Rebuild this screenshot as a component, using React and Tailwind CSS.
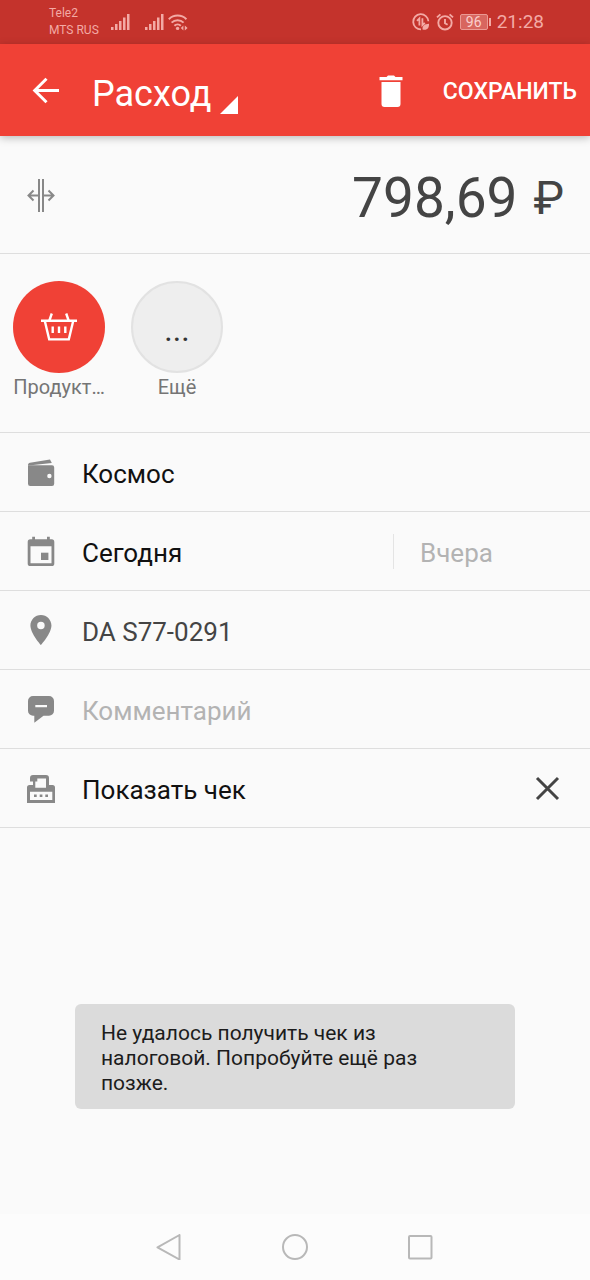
const categories = [
  { id: 'food', label: 'Продукт…', active: true },
  { id: 'more', label: 'Ещё', active: false },
]

function SignalIcon() {
  return (
    <svg className="h-5 w-[19px]" viewBox="0 0 19 20" fill="currentColor">
      <rect x="0" y="15" width="2.5" height="3" />
      <rect x="4" y="12" width="2.5" height="6" />
      <rect x="8" y="9" width="2.5" height="9" />
      <rect x="12" y="5.5" width="2.5" height="12.5" />
      <rect x="16" y="2" width="2.5" height="16" />
    </svg>
  )
}

function WifiIcon() {
  return (
    <svg className="h-5 w-5" viewBox="0 0 20 20" fill="none" stroke="currentColor" strokeWidth="2">
      <path d="M.8 7.2a12.6 12.6 0 0 1 17.6 0" />
      <path d="M3.6 10.6a8.6 8.6 0 0 1 12 0" />
      <path d="M6.4 13.8a4.6 4.6 0 0 1 6.4 0" />
      <circle cx="9.6" cy="16.4" r="1.7" fill="currentColor" stroke="none" />
      <path d="M15.4 13.6v4.8l-2.6-2.4zM16.8 13.6v4.8l2.8-2.4z" fill="currentColor" stroke="none" />
    </svg>
  )
}

function DataSaverIcon() {
  return (
    <svg className="h-5 w-[18px]" viewBox="0 0 18 20" fill="none" stroke="currentColor" strokeWidth="1.8">
      <path d="M16.4 9.2A7.6 7.6 0 1 0 9 17.4" />
      <path d="M7.4 13.4V6.4L5 8.8M10.4 6.2v7l2.4-2.4" />
      <path d="M10.6 17.6c-.6-4 2.2-5.6 6.4-5.8.2 4.4-1.8 6.8-6.4 5.8z" fill="currentColor" stroke="none" />
    </svg>
  )
}

function AlarmIcon() {
  return (
    <svg className="h-5 w-[18px]" viewBox="0 0 18 20" fill="none" stroke="currentColor" strokeWidth="1.9">
      <circle cx="9" cy="10.8" r="6.7" />
      <path d="M9 7v4.2l2.6 1.6M1 5.4 4.4 2.4M17 5.4 13.6 2.4" />
    </svg>
  )
}

function StatusBar() {
  return (
    <div className="flex h-11 items-center bg-[#c4332c] pl-[49px] pr-[46px] text-[#f3aaa5]">
      <div className="w-[62px] text-[12px] leading-[17px]">
        <div>Tele2</div>
        <div>MTS RUS</div>
      </div>
      <SignalIcon />
      <div className="ml-[15px] flex items-center gap-1">
        <SignalIcon />
        <WifiIcon />
      </div>
      <div className="ml-auto flex items-center gap-[6px]">
        <DataSaverIcon />
        <AlarmIcon />
        <div className="flex items-center gap-px">
          <div className="h-4 w-7 rounded-xs border border-[#eb9993] bg-[#d8665f] text-center text-[14px] leading-[14px] text-[#fbcfcc]">
            96
          </div>
          <div className="h-2 w-[2px] bg-current" />
        </div>
        <div className="text-[19px] leading-5">21:28</div>
      </div>
    </div>
  )
}

function Header() {
  return (
    <header className="flex h-[92px] items-center bg-[#f04136] pl-8 pr-[13px] text-white shadow-[0_2px_8px_rgba(0,0,0,0.25)]">
      <button type="button" aria-label="Назад">
        <svg className="h-7 w-7" viewBox="0 0 28 28" fill="none" stroke="currentColor" strokeWidth="3">
          <path d="M27 14.5H3M14.5 2.7 2.7 14.5l11.8 11.8" />
        </svg>
      </button>
      <div className="ml-8 flex items-end">
        <select
          aria-label="Тип операции"
          className="field-sizing-content h-12 appearance-none bg-transparent pt-1 text-[36px] leading-[48px]"
          defaultValue="expense"
        >
          <option value="expense">Расход</option>
        </select>
        <svg className="ml-[9px] h-[18px] w-[18px]" viewBox="0 0 18 18" fill="currentColor">
          <path d="M18 0v18H0z" />
        </svg>
      </div>
      <button type="button" aria-label="Удалить" className="ml-auto pt-0.5">
        <svg className="h-8 w-6" viewBox="0 0 24 32" fill="currentColor">
          <path d="M.5 2H7.5L9 .5h6L16.5 2h7v3.2H.5zM2.500 7h19v22a3 3 0 0 1-3 3h-13a3 3 0 0 1-3-3z" />
        </svg>
      </button>
      <button type="button" className="ml-10 pt-1 text-[23px] leading-8 font-medium">
        СОХРАНИТЬ
      </button>
    </header>
  )
}

function SplitIcon() {
  return (
    <svg className="h-9 w-8" viewBox="0 0 32 36" fill="none" stroke="#888" strokeWidth="2">
      <path d="M14 2v33M18 2v33" />
      <path d="M13 18.5H3M8.5 13.5l-5 5 5 5M19 18.5h10M23.5 13.5l5 5-5 5" />
    </svg>
  )
}

function BasketIcon() {
  return (
    <svg className="h-7 w-9" viewBox="0 0 36 28" fill="none" stroke="#fff" strokeWidth="2.4">
      <path d="M0 7.8h36M3.8 8l4.4 18.4h19.6L32.2 8" />
      <path d="M10.8.5 8.4 7.5M25.2.5l2.4 7" />
      <path d="M11.7 13.5V20M18 13.5V20M24.3 13.5V20" />
    </svg>
  )
}

function WalletIcon() {
  return (
    <svg className="h-8 w-8 shrink-0" viewBox="0 0 32 32" fill="#888">
      <path d="M3 9C3 7.600 3.800 6.900 5 6.700L25 3.600l1.800 3.400L6 9.200H3z" />
      <path
        fillRule="evenodd"
        d="M3 9.200h24a2.200 2.200 0 0 1 2.200 2.200v16.400A2.200 2.200 0 0 1 27 30H5.200A2.200 2.200 0 0 1 3 27.800zM24.400 17.800a2.200 2.200 0 1 0 0 4.400 2.200 2.200 0 0 0 0-4.400z"
      />
    </svg>
  )
}

function CalendarIcon() {
  return (
    <svg className="h-8 w-8 shrink-0" viewBox="0 0 32 32" fill="#888">
      <path
        fillRule="evenodd"
        d="M7.2 1.8H10v2.5h12V1.8h2.8v2.5h1.9a2.6 2.6 0 0 1 2.6 2.6v21.5a2.6 2.6 0 0 1-2.6 2.6H5.3a2.6 2.6 0 0 1-2.6-2.6V6.900a2.600 2.600 0 0 1 2.600-2.600h1.900zM5.500 11.300v17h21v-17z"
      />
      <path d="M16 17.700h7.400V25H16z" />
    </svg>
  )
}

function PinIcon() {
  return (
    <svg className="h-8 w-8 shrink-0" viewBox="1.4 1.4 21.3 21.3" fill="#888">
      <path d="M12 2C8.130 2 5 5.130 5 9c0 5.250 7 13 7 13s7-7.750 7-13c0-3.870-3.130-7-7-7zm0 9.500a2.500 2.500 0 1 1 0-5 2.500 2.500 0 0 1 0 5z" />
    </svg>
  )
}

function CommentIcon() {
  return (
    <svg className="h-8 w-8 shrink-0" viewBox="0 0 32 32" fill="#888">
      <path
        fillRule="evenodd"
        d="M8 3h16a5 5 0 0 1 5 5v9.700a5 5 0 0 1-5 5h-5.500L9.300 29.700V22.700H8a5 5 0 0 1-5-5V8a5 5 0 0 1 5-5zM10.300 12v2.300H22V12z"
      />
    </svg>
  )
}

function ReceiptIcon() {
  return (
    <svg className="h-8 w-8 shrink-0" viewBox="0 0 32 32" fill="#888">
      <path
        fillRule="evenodd"
        d="M4.500 13h23A2.500 2.500 0 0 1 30 15.500V31H2V15.500A2.500 2.500 0 0 1 4.500 13zM5 19.700V28h22.300v-8.300z"
      />
      <path d="M8 3h13a3 3 0 0 1 3 3v8H8V9.500H5V6a3 3 0 0 1 3-3z" />
      <path d="M10.300 9.500h2V6.500H21v9.200H10.300z" fill="#fafafa" />
      <path d="M9 22.400h2.700v2.700H9zM14.700 22.400h2.700v2.700h-2.700zM20.300 22.400H23v2.700h-2.700z" />
    </svg>
  )
}

function Row({ icon, children }) {
  return (
    <div className="flex h-[79px] items-center gap-[25px] border-b border-[#dedede] pl-[25px] text-[26px] leading-8 text-[#111]">
      {icon}
      {children}
    </div>
  )
}

function CategoryButton({ label, active }) {
  return (
    <button type="button" className="flex w-[92px] flex-col items-center text-[20px] leading-7 text-[#757575]">
      {active ? (
        <span className="flex size-[92px] items-center justify-center rounded-full bg-[#f04136]">
          <BasketIcon />
        </span>
      ) : (
        <span className="flex size-[92px] items-center justify-center rounded-full border-2 border-[#e2e2e2] bg-[#eee] pt-1.5 text-[32px] text-[#333]">
          ...
        </span>
      )}
      <span className="whitespace-nowrap">{label}</span>
    </button>
  )
}

function NavBar() {
  return (
    <nav className="flex h-[66px] items-center justify-center gap-[100px] bg-[#fcfcfc] text-[#b8b8b8]">
      <button type="button" aria-label="Назад">
        <svg className="size-[26px]" viewBox="0 0 26 26" fill="none" stroke="currentColor" strokeWidth="2" strokeLinejoin="round">
          <path d="M23.500 1v24.500L1.500 13.300z" />
        </svg>
      </button>
      <button type="button" aria-label="Домой">
        <svg className="size-[26px]" viewBox="0 0 26 26" fill="none" stroke="currentColor" strokeWidth="2">
          <circle cx="13" cy="13" r="12" />
        </svg>
      </button>
      <button type="button" aria-label="Недавние">
        <svg className="size-[26px]" viewBox="0 0 26 26" fill="none" stroke="currentColor" strokeWidth="2">
          <rect x="1" y="2" width="22.500" height="22.500" rx="1" />
        </svg>
      </button>
    </nav>
  )
}

export default function App() {
  return (
    <div className="flex min-h-screen flex-col bg-[#fafafa] font-[Roboto,sans-serif]">
      <StatusBar />
      <Header />

      <main className="flex flex-1 flex-col">
        <div className="flex h-[118px] items-center border-b border-[#dedede] pl-[25px] pr-[26px] text-[#444]">
          <button type="button" aria-label="Разделить">
            <SplitIcon />
          </button>
          <input
            aria-label="Сумма"
            className="min-w-0 flex-1 bg-transparent pt-[6px] text-right text-[55px] leading-[64px]"
            defaultValue="798,69"
          />
          <span className="ml-4 pt-[6px] text-[46px] leading-[64px]">₽</span>
        </div>

        <div className="flex h-[179px] items-start gap-[26px] border-b border-[#dedede] pl-[13px] pt-[27px]">
          {categories.map((c) => (
            <CategoryButton key={c.id} label={c.label} active={c.active} />
          ))}
        </div>

        <Row icon={<WalletIcon />}>
          <button type="button" className="flex-1 pt-[3px] text-left">Космос</button>
        </Row>
        <Row icon={<CalendarIcon />}>
          <button type="button" className="flex-1 pt-[3px] text-left">Сегодня</button>
          <button type="button" className="w-[197px] border-l border-[#e4e4e4] pl-[26px] pt-[3px] text-left text-[#b3b3b3]">
            Вчера
          </button>
        </Row>
        <Row icon={<PinIcon />}>
          <input
            aria-label="Место"
            className="min-w-0 flex-1 bg-transparent pt-[3px] text-[#444]"
            defaultValue="DA S77-0291"
          />
        </Row>
        <Row icon={<CommentIcon />}>
          <input
            aria-label="Комментарий"
            className="min-w-0 flex-1 bg-transparent pt-[3px] placeholder:text-[#b3b3b3]"
            placeholder="Комментарий"
          />
        </Row>
        <Row icon={<ReceiptIcon />}>
          <button type="button" className="flex-1 pt-[3px] text-left">Показать чек</button>
          <button type="button" aria-label="Убрать чек" className="mr-[30px]">
            <svg className="size-[25px]" viewBox="0 0 25 25" fill="none" stroke="#444" strokeWidth="3">
              <path d="M2 2l21 21M23 2 2 23" />
            </svg>
          </button>
        </Row>

        <div className="mx-[75px] mb-[105px] mt-auto rounded-md bg-[#dbdbdb] pb-[13px] pl-[26px] pr-[60px] pt-[17px] text-[21px] leading-[25px] text-[#1c1c1c]">
          Не удалось получить чек из налоговой. Попробуйте ещё раз позже.
        </div>
      </main>

      <NavBar />
    </div>
  )
}
